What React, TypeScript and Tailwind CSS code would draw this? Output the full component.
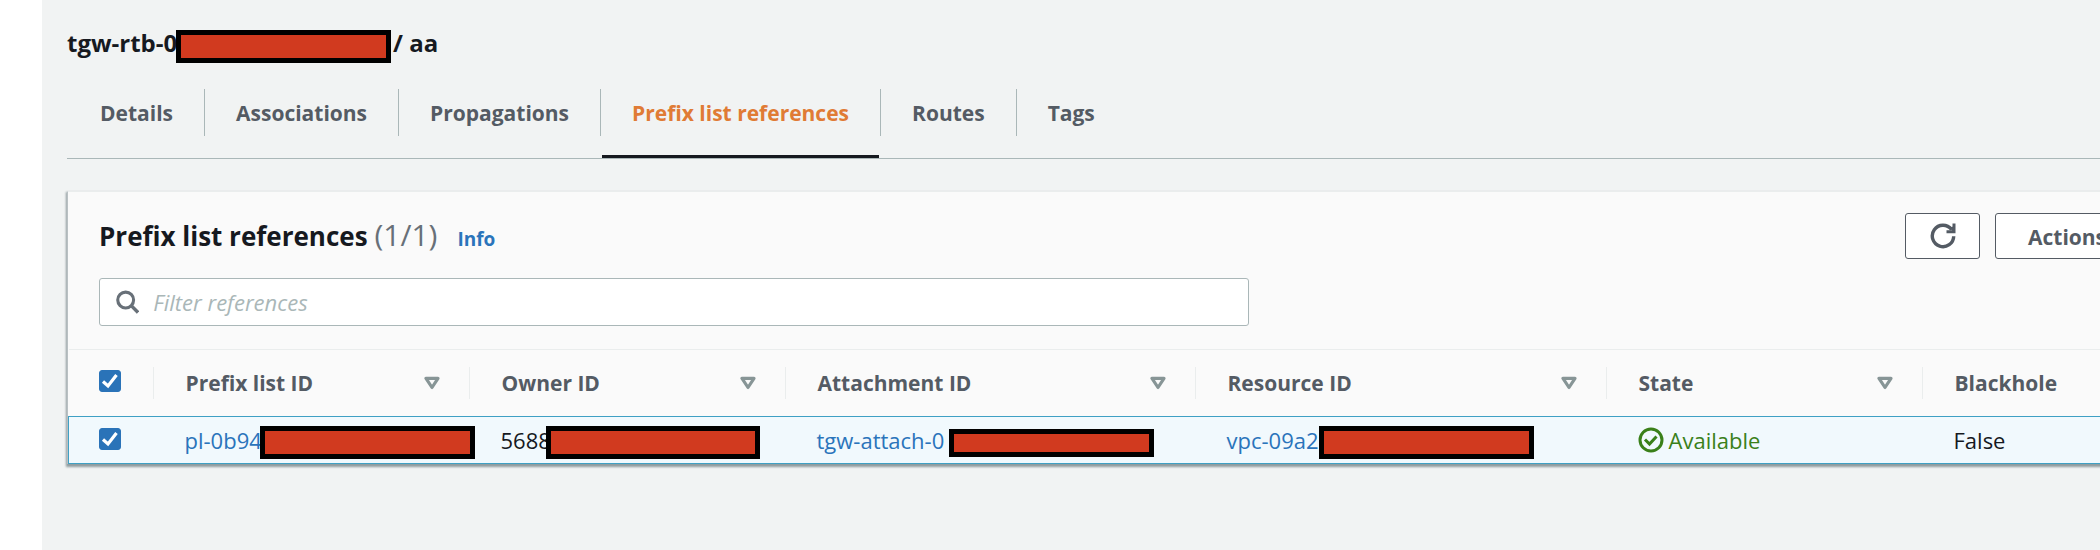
import { useState } from "react";
import type { ReactNode } from "react";

const tabs = ["Details", "Associations", "Propagations", "Prefix list references", "Routes", "Tags"];

const columns = [
  { name: "Prefix list ID", width: "w-[316px]" },
  { name: "Owner ID", width: "w-[316px]" },
  { name: "Attachment ID", width: "w-[410px]" },
  { name: "Resource ID", width: "w-[411px]" },
  { name: "State", width: "w-[316px]" },
  { name: "Blackhole", width: "" },
];

function Redaction({ className }: { className: string }) {
  return <span aria-hidden="true" className={`border-[5px] border-black bg-[#d13a1f] ${className}`} />;
}

function Checkbox({ label, checked, onChange }: { label: string; checked: boolean; onChange: () => void }) {
  return (
    <label className="grid size-[22px]">
      <input
        type="checkbox"
        aria-label={label}
        checked={checked}
        onChange={onChange}
        className="peer col-start-1 row-start-1 size-[22px] appearance-none rounded-[3px] border border-[#687078] bg-white checked:border-[#2a73b8] checked:bg-[#2a73b8]"
      />
      <svg viewBox="0 0 22 22" className="pointer-events-none invisible col-start-1 row-start-1 size-[22px] peer-checked:visible">
        <path d="M4 11.5 9 16 17.5 5" fill="none" stroke="#fff" strokeWidth="3.2" />
      </svg>
    </label>
  );
}

function SortIcon() {
  return (
    <svg viewBox="0 0 16 14" className="h-[14px] w-4">
      <path d="M2 2.3H14L8 11.5Z" fill="none" stroke="#879596" strokeWidth="3.2" strokeLinejoin="round" />
    </svg>
  );
}

function Cell({ children }: { children: ReactNode }) {
  return <td className="relative border-y border-[#3fa0c4] p-0 pl-8 text-left whitespace-nowrap">{children}</td>;
}

export default function App() {
  const [active, setActive] = useState("Prefix list references");
  const [selected, setSelected] = useState(true);
  const toggle = () => setSelected(!selected);

  return (
    <div className="min-h-screen overflow-hidden bg-white pl-[42px] font-['Open_Sans',sans-serif] text-[22px] leading-8 text-[#16191f]">
      <main className="min-h-screen bg-[#f1f3f3] pl-[25px]">
        <h1 className="flex items-center pt-[29px] text-2xl font-bold">
          <span className="w-[109px] whitespace-nowrap pb-[6px] leading-7">tgw-rtb-0</span>
          <Redaction className="relative h-[33px] w-[215px]" />
          <span className="pb-[6px] pl-[2px] leading-7">/ aa</span>
        </h1>

        <nav role="tablist" className="flex h-24 items-stretch border-b border-[#aab7b8] pt-[26px] pl-[2px] text-[21px] leading-8">
          {tabs.map((tab, i) => (
            <div key={tab} className="flex">
              {i > 0 && <span className="h-[47px] w-px bg-[#aab7b8]" />}
              <button
                role="tab"
                aria-selected={tab === active}
                onClick={() => setActive(tab)}
                className={`mx-px flex h-full items-start border-b-[3px] px-[30px] pt-2 font-bold whitespace-nowrap ${
                  tab === active ? "border-[#16191f] text-[#e07b35]" : "border-transparent text-[#545b64]"
                }`}
              >
                {tab}
              </button>
            </div>
          ))}
        </nav>

        <section className="mt-8 -mr-[92px] border-l border-t border-l-[#b9c0c3] border-t-[#eaeded] bg-[#fafafa] shadow-[0_2px_2px_1px_rgba(0,28,36,0.4)]">
          <div className="flex items-start justify-between pr-8 pl-[31px] pt-[21px]">
            <div className="flex items-baseline pt-[2px]">
              <h2 className="text-[26px] leading-10 font-bold">
                Prefix list references <span className="text-[30px] font-normal text-[#687078]">(1/1)</span>
              </h2>
              <a href="#info" className="ml-5 text-[19px] font-bold text-[#2a74bb]">
                Info
              </a>
            </div>
            <div className="flex gap-[15px] text-[21px]">
              <button aria-label="Refresh" className="flex h-[46px] w-[75px] items-center justify-center rounded-[3px] border border-[#545b64] bg-white text-[#545b64]">
                <svg viewBox="0 0 26 26" className="size-[26px]">
                  <path d="M23.7 13.2A10.7 10.7 0 1 1 21.5 6.5" fill="none" stroke="currentColor" strokeWidth="3.4" />
                  <path d="M24 0.5V8.7H16.5" fill="none" stroke="currentColor" strokeWidth="3" />
                  <path d="M18.5 4.5 24 3.5V9Z" fill="currentColor" />
                </svg>
              </button>
              <button className="flex h-[46px] w-[165px] items-center gap-3 rounded-[3px] border border-[#545b64] bg-white pt-px pl-8 font-bold text-[#545b64]">
                Actions
                <svg viewBox="0 0 16 10" className="h-[10px] w-4">
                  <path d="M0 0H16L8 10Z" fill="currentColor" />
                </svg>
              </button>
            </div>
          </div>

          <label className="mt-[19px] ml-[31px] flex h-12 w-[1150px] items-center gap-[14px] rounded-[3px] border border-[#aab7b8] bg-white pl-4">
            <svg viewBox="0 0 24 24" className="size-6">
              <circle cx="10" cy="10" r="8.2" fill="none" stroke="#687078" strokeWidth="3.2" />
              <path d="M15.5 15.5 22.8 22.8" stroke="#687078" strokeWidth="3.6" />
            </svg>
            <input
              type="search"
              aria-label="Filter references"
              placeholder="Filter references"
              className="w-full bg-transparent outline-none placeholder:text-[#aab7b8] placeholder:italic"
            />
          </label>

          <table className="mt-[23px] w-full table-fixed border-collapse">
            <thead>
              <tr className="h-[67px] border-t border-[#eaeded] text-[21px]">
                <th className="w-[84px] p-0 pl-[30px]">
                  <div className="flex h-[26px] items-start">
                    <Checkbox label="Select all references" checked={selected} onChange={toggle} />
                  </div>
                </th>
                {columns.map((c) => (
                  <th key={c.name} className={`p-0 text-left font-bold text-[#545b64] ${c.width}`}>
                    <div className="flex h-8 items-center justify-between border-l border-[#eaeded] pr-[29px] pl-8">
                      {c.name}
                      <SortIcon />
                    </div>
                  </th>
                ))}
              </tr>
            </thead>
            <tbody>
              <tr className="h-[47px] bg-[#f1f9fd]">
                <td className="border border-r-0 border-[#3fa0c4] pb-[2px] pl-[30px]">
                  <Checkbox label="Select reference" checked={selected} onChange={toggle} />
                </td>
                <Cell>
                  <a href="#prefix-list" className="text-[#2a74bb]">pl-0b94</a>
                  <Redaction className="absolute top-[9px] left-[107px] z-10 h-[33px] w-[215px]" />
                </Cell>
                <Cell>
                  5688
                  <Redaction className="absolute top-[9px] left-[77px] h-[33px] w-[214px]" />
                </Cell>
                <Cell>
                  <a href="#attachment" className="text-[#2a74bb]">tgw-attach-0</a>
                  <Redaction className="absolute top-3 left-[164px] h-7 w-[205px]" />
                </Cell>
                <Cell>
                  <a href="#resource" className="text-[#2a74bb]">vpc-09a2</a>
                  <Redaction className="absolute top-[9px] left-[124px] h-[33px] w-[215px]" />
                </Cell>
                <Cell>
                  <span className="flex items-center gap-[5px] text-[#3a8019]">
                    <svg viewBox="0 0 26 26" className="size-[26px]">
                      <circle cx="13" cy="13" r="11" fill="none" stroke="currentColor" strokeWidth="3" />
                      <path d="M7 12.5 11.5 17 18.5 9.5" fill="none" stroke="currentColor" strokeWidth="3" />
                    </svg>
                    Available
                  </span>
                </Cell>
                <Cell>False</Cell>
              </tr>
            </tbody>
          </table>
        </section>
      </main>
    </div>
  );
}
